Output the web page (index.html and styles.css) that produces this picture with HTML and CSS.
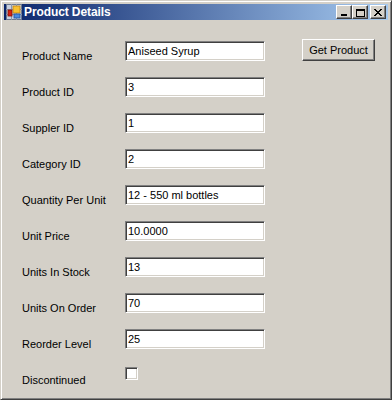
FILE: index.html
```html
<!DOCTYPE html>
<html lang="en">
<head>
<meta charset="UTF-8">
<title>Product Details</title>
<link rel="stylesheet" href="styles.css">
</head>
<body>
<div class="window">
  <div class="titlebar">
    <svg class="app-icon" width="16" height="16" viewBox="0 0 16 16">
      <rect x="0.5" y="0.5" width="15" height="15" fill="#c8d0e0" stroke="#6a7890"/>
      <path d="M0 5.5H16M0 10.5H16M5.5 0V16M10.5 0V16" stroke="#8a96aa" fill="none"/>
      <rect x="2" y="6" width="4" height="6" fill="#d82010" stroke="#801008" stroke-width="0.8"/>
      <rect x="7" y="2" width="7" height="7" fill="#f8c030" stroke="#c08010" stroke-width="0.8"/>
      <rect x="8" y="10" width="6" height="4" fill="#4a8ae0" stroke="#2050a0" stroke-width="0.8"/>
    </svg>
    <span class="title">Product Details</span>
    <div class="caption-btns">
      <span class="cap"><svg width="8" height="7" viewBox="0 0 8 7"><rect x="1" y="5" width="6" height="2" fill="#000"/></svg></span>
      <span class="cap"><svg width="9" height="9" viewBox="0 0 9 9"><rect x="0.5" y="1.5" width="8" height="7" fill="none" stroke="#000"/><rect x="0" y="1" width="9" height="2" fill="#000"/></svg></span>
      <span class="cap close"><svg width="8" height="7" viewBox="0 0 8 7"><path d="M0 0L7 7M1 0L8 7M7 0L0 7M8 0L1 7" stroke="#000" stroke-width="1"/></svg></span>
    </div>
  </div>

  <div class="client">
    <div class="row"><label>Product Name</label><input class="txt" value="Aniseed Syrup"><button class="btn">Get Product</button></div>
    <div class="row"><label>Product ID</label><input class="txt" value="3"></div>
    <div class="row"><label>Suppler ID</label><input class="txt" value="1"></div>
    <div class="row"><label>Category ID</label><input class="txt" value="2"></div>
    <div class="row"><label>Quantity Per Unit</label><input class="txt" value="12 - 550 ml bottles"></div>
    <div class="row"><label>Unit Price</label><input class="txt" value="10.0000"></div>
    <div class="row"><label>Units In Stock</label><input class="txt" value="13"></div>
    <div class="row"><label>Units On Order</label><input class="txt" value="70"></div>
    <div class="row"><label>Reorder Level</label><input class="txt" value="25"></div>
    <div class="row"><label>Discontinued</label><input type="checkbox" class="chk"></div>
  </div>
</div>
</body>
</html>
```

FILE: styles.css
```css
*{box-sizing:border-box;margin:0;padding:0}
body{width:392px;height:400px;background:#d4d0c8;font-family:"Liberation Sans",Arial,sans-serif;font-size:11px;color:#000}

/* window frame, classic 3d */
.window{width:392px;height:400px;background:#d4d0c8;
  border:1px solid;border-color:#d4d0c8 #404040 #404040 #d4d0c8;
  box-shadow:inset 1px 1px #fff,inset -1px -1px #808080;
  padding:3px;display:flex;flex-direction:column}

.titlebar{height:18px;display:flex;align-items:center;padding:0 2px 0 2px;
  background:linear-gradient(to right,#0a246a,#a6caf0);color:#fff}
.app-icon{flex:none;margin-right:2px}
.title{font-weight:700;font-size:12px;flex:1;letter-spacing:-.1px}
.caption-btns{display:flex;gap:0}
.cap{width:16px;height:14px;background:#d4d0c8;display:flex;align-items:center;justify-content:center;
  border:1px solid;border-color:#fff #404040 #404040 #fff;box-shadow:inset -1px -1px #808080}
.cap.close{margin-left:2px}

.client{flex:1;padding:21px 0 0 18px}
.row{display:flex;align-items:flex-start;height:36px}
.row label{width:103px;padding-top:9px;line-height:13px}
.txt{width:140px;height:20px;font:inherit;padding:1px 2px;color:#000;background:#fff;outline:none;
  border:1px solid;border-color:#808080 #fff #fff #808080;
  box-shadow:inset 1px 1px #404040,inset -1px -1px #d4d0c8}
.btn{width:73px;height:22px;margin:-2px 0 0 37px;font:inherit;background:#d4d0c8;color:#000;
  border:1px solid;border-color:#fff #404040 #404040 #fff;box-shadow:inset -1px -1px #808080}
.chk{appearance:none;width:13px;height:13px;margin-top:2px;background:#fff;
  border:1px solid;border-color:#808080 #fff #fff #808080;
  box-shadow:inset 1px 1px #404040,inset -1px -1px #d4d0c8}
```
